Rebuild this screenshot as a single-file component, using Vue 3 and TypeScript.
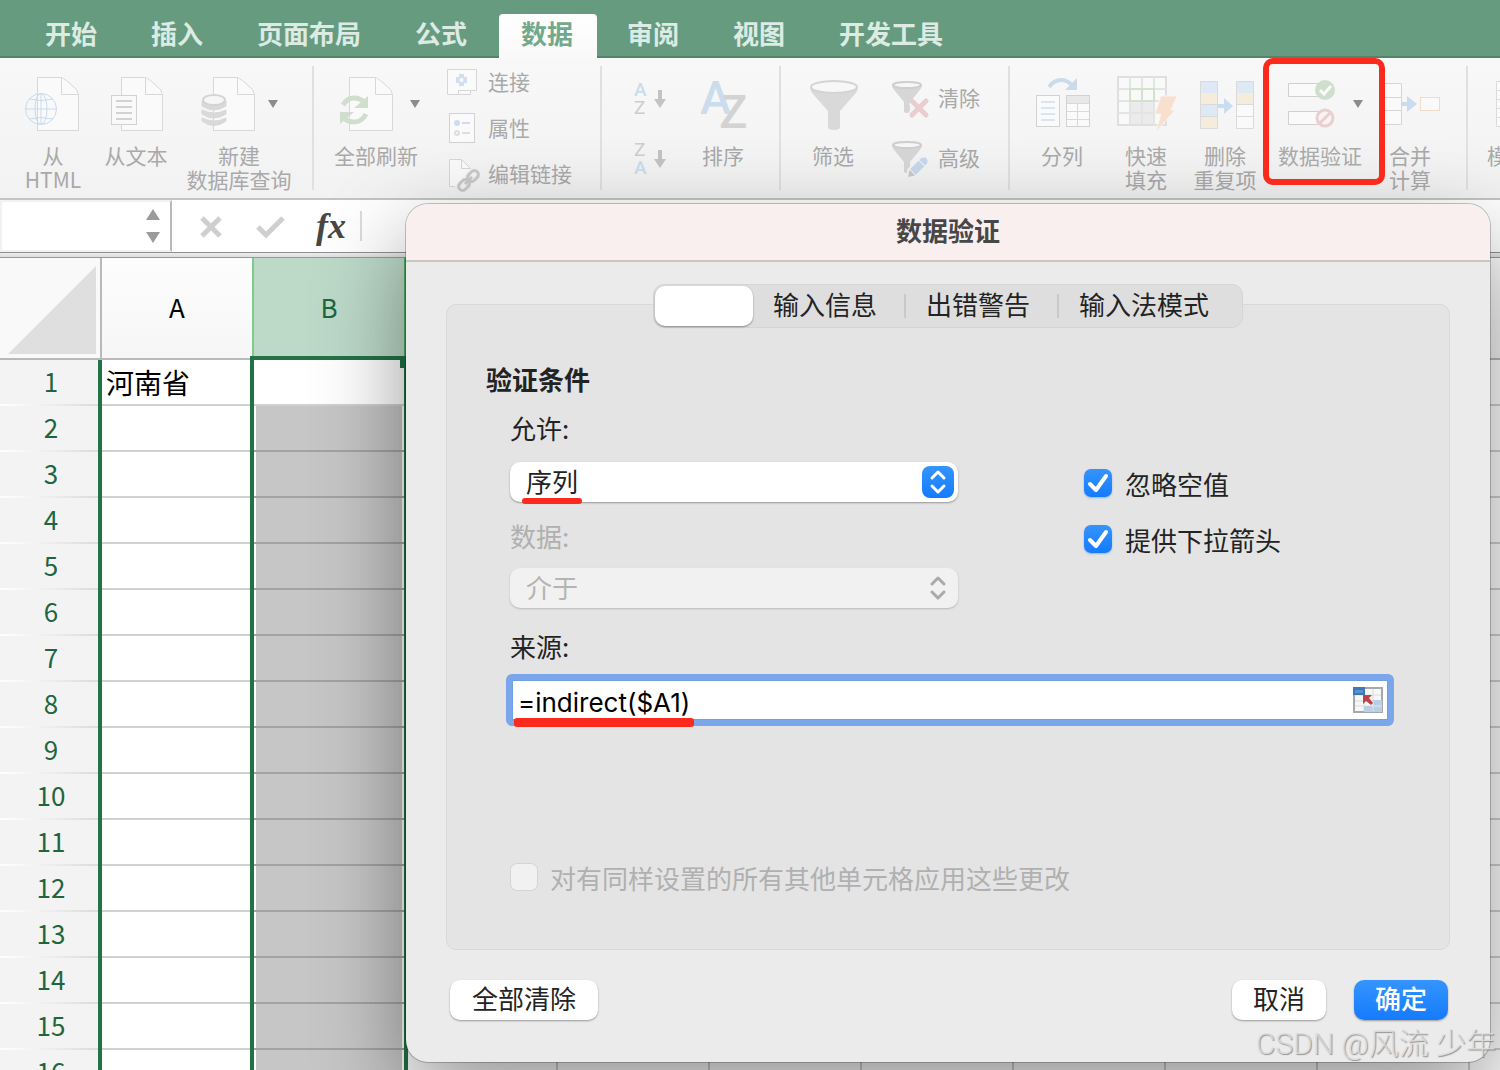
<script setup lang="ts">
import { ref } from 'vue'

interface Column {
  id: number
  label: string
}

const menuTabs: string[] = ['开始', '插入', '页面布局', '公式', '数据', '审阅', '视图', '开发工具']
const activeMenu = ref('数据')

const columns: Column[] = ['A', 'B', '', '', '', '', '', '', '', ''].map((label, id) => ({ id, label }))
const rows: number[] = Array.from({ length: 16 }, (_, i) => i + 1)
const cells: Record<string, string> = { A1: '河南省' }

const allow = ref('序列')
const operator = ref('介于')
const source = ref('=indirect($A1)')
const ignoreBlank = ref(true)
const showDropdown = ref(true)
const applyAll = ref(false)
const nameBox = ref('')
</script>

<template>
  <div class="app">
    <nav class="menu">
      <button
        v-for="tab in menuTabs"
        :key="tab"
        type="button"
        class="menu-tab"
        :class="{ active: tab === activeMenu }"
        @click="activeMenu = tab"
      >{{ tab }}</button>
    </nav>

    <div class="ribbon">
      <div class="group g-source">
        <button type="button" class="tool w70">
          <svg viewBox="18 66 70 77" width="70" height="77" aria-hidden="true">
            <path class="page" d="M37.5 77.5h24l5 3l10 9l2 5v36h-41z" />
            <path class="page" d="M61.5 77.5v17h17" />
            <g class="globe">
              <circle cx="41" cy="109" r="15.5" />
              <ellipse cx="41" cy="109" rx="6" ry="15.5" />
              <path d="M25.500 109h31M41 93.500v31M29 99q12 3 24 0M29 119q12-3 24 0" />
            </g>
          </svg>
          <span>从<br>HTML</span>
        </button>
        <button type="button" class="tool w72">
          <svg viewBox="100 66 72 77" width="72" height="77" aria-hidden="true">
            <path class="page" d="M121.500 77.500h24l5 3l10 9l2 5v36h-41z" />
            <path class="page" d="M145.500 77.500v17h17" />
            <rect x="111.500" y="95.500" width="25" height="29" fill="#f9f9f9" stroke="#d2d2d2" />
            <path d="M116 101h16M116 107h16M116 113h16M116 119h16" stroke="#d2d2d2" stroke-width="2" />
          </svg>
          <span>从文本</span>
        </button>
        <button type="button" class="tool w110">
          <svg viewBox="184 66 110 77" width="110" height="77" aria-hidden="true">
            <path class="page" d="M213.500 77.500h24l5 3l10 9l2 5v36h-41z" />
            <path class="page" d="M237.500 77.500v17h17" />
            <path d="M202 118v3q12 9 24 0v-3q-12 6-24 0zM202 110v4q12 8 24 0v-4q-12 6-24 0zM202 101v5q12 8 24 0v-5z" fill="#d9d9d9" stroke="#d9d9d9" />
            <ellipse cx="214" cy="100" rx="11" ry="5" fill="#f6f6f6" stroke="#d4d4d4" stroke-width="2" />
            <path class="caret" d="M268 100h10l-5 8z" />
          </svg>
          <span>新建<br>数据库查询</span>
        </button>
      </div>

      <div class="group g-connect">
        <button type="button" class="tool w96">
          <svg viewBox="328 66 96 77" width="96" height="77" aria-hidden="true">
            <path class="page" d="M349.500 77.500h26l5 3l10 9l2 5v36h-43z" />
            <path class="page" d="M375.500 77.500v17h17" />
            <g class="refresh">
              <path d="M343 105q4-7 11-7q6 0 10 4" />
              <path d="M366 114q-4 8-12 8q-6 0-10-4" />
            </g>
            <path d="M368 96v12h-14zM340 124v-12h14z" fill="#d0dfcd" />
            <path class="caret" d="M410 100h10l-5 8z" />
          </svg>
          <span>全部刷新</span>
        </button>
        <div class="stack three">
          <button type="button" class="mini">
            <svg viewBox="0 0 32 32" width="32" height="32" aria-hidden="true">
              <path d="M1.500 3.500h29v21h-6v4h-23z" fill="#fafafa" stroke="#d6d6d6" />
              <path d="M12.500 28v-3.500h12" fill="none" stroke="#d6d6d6" />
              <path d="M13 8h5v3h3v6h-3v3h-5v-3h-3v-6h3z" fill="#cfdff1" />
              <circle cx="15.500" cy="14" r="2" fill="#fafafa" />
            </svg>
            <span>连接</span>
          </button>
          <button type="button" class="mini">
            <svg viewBox="0 0 32 32" width="32" height="32" aria-hidden="true">
              <rect x="3.500" y="1.500" width="25" height="29" fill="#fafafa" stroke="#d2d2d2" />
              <circle cx="11" cy="11" r="3" fill="#cddcf0" />
              <path d="M16 11h8" stroke="#cddcf0" stroke-width="2" />
              <circle cx="11" cy="21" r="2" fill="none" stroke="#dedede" stroke-width="2" />
              <path d="M16 21h8" stroke="#dedede" stroke-width="2" />
            </svg>
            <span>属性</span>
          </button>
          <button type="button" class="mini">
            <svg viewBox="0 0 32 32" width="32" height="32" aria-hidden="true">
              <path d="M9 28.500h-5.500v-27h12l9 9" fill="#fafafa" stroke="#d6d6d6" />
              <path d="M15.500 1.500v9h9" fill="none" stroke="#d6d6d6" />
              <g fill="none" stroke="#c9c9c9" stroke-width="3">
                <rect x="-6" y="-4" width="12" height="8" rx="4" transform="translate(27 18) rotate(-45)" />
                <rect x="-6" y="-4" width="12" height="8" rx="4" transform="translate(18 27) rotate(-45)" />
              </g>
              <path d="M19 26l7-7" stroke="#c9c9c9" stroke-width="3" />
            </svg>
            <span>编辑链接</span>
          </button>
        </div>
      </div>

      <div class="group g-sort">
        <div class="stack sorts">
          <button type="button" class="sort" aria-label="升序">
            <svg viewBox="0 0 40 40" width="40" height="40" aria-hidden="true">
              <text x="4" y="17" class="ltr blue">A</text>
              <text x="4" y="35" class="ltr">Z</text>
              <path d="M28 11h4v9h4l-6 9l-6-9h4z" fill="#c3c3c3" />
            </svg>
          </button>
          <button type="button" class="sort" aria-label="降序">
            <svg viewBox="0 0 40 40" width="40" height="40" aria-hidden="true">
              <text x="4" y="17" class="ltr">Z</text>
              <text x="4" y="35" class="ltr blue">A</text>
              <path d="M28 11h4v9h4l-6 9l-6-9h4z" fill="#c3c3c3" />
            </svg>
          </button>
        </div>
        <button type="button" class="tool w66">
          <svg viewBox="690 66 66 77" width="66" height="77" aria-hidden="true">
            <text x="719" y="128" class="big">Z</text>
            <text x="700" y="114" class="big blue">A</text>
          </svg>
          <span>排序</span>
        </button>
      </div>

      <div class="group g-filter">
        <button type="button" class="tool w66">
          <svg viewBox="800 66 66 77" width="66" height="77" aria-hidden="true">
            <path d="M810 87q0 4 3 7l15 17v16q0 3 6 3t6-3v-16l15-17q3-3 3-7z" fill="#d9d9d9" />
            <ellipse cx="834" cy="87" rx="23" ry="6" fill="#f7f7f7" stroke="#d4d4d4" stroke-width="2" />
          </svg>
          <span>筛选</span>
        </button>
        <div class="stack two">
          <button type="button" class="mini">
            <svg viewBox="0 0 40 36" width="40" height="36" aria-hidden="true">
              <path d="M2 4q0 3 3 6l9 11v10q3 2 6 0v-10l9-11q3-3 3-6z" fill="#d6d6d6" />
              <ellipse cx="17" cy="4" rx="14" ry="3" fill="#f7f7f7" stroke="#cfcfcf" stroke-width="2" />
              <path d="M22 20l14 14M36 20l-14 14" stroke="#f6f6f6" stroke-width="9" />
              <path d="M22 20l14 14M36 20l-14 14" stroke="#e9cdd0" stroke-width="5" stroke-linecap="round" />
            </svg>
            <span>清除</span>
          </button>
          <button type="button" class="mini">
            <svg viewBox="0 0 40 36" width="40" height="36" aria-hidden="true">
              <path d="M2 4q0 3 3 6l9 11v10q3 2 6 0v-10l9-11q3-3 3-6z" fill="#d6d6d6" />
              <ellipse cx="17" cy="4" rx="14" ry="3" fill="#f7f7f7" stroke="#cfcfcf" stroke-width="2" />
              <g transform="translate(28 26) rotate(-45)">
                <path d="M-16 0l7-6h19q4 1 4 6t-4 6h-19z" fill="#f3f3f3" />
                <path d="M-14 0l6-4v8z" fill="#c9c9c9" />
                <path d="M-7-4h12v8h-12z" fill="#c6d8ea" />
                <path d="M6-4h2q4 1 4 4t-4 4h-2z" fill="#c6d8ea" />
              </g>
            </svg>
            <span>高级</span>
          </button>
        </div>
      </div>

      <div class="group g-tools">
        <button type="button" class="tool w72">
          <svg viewBox="1026 66 72 77" width="72" height="77" aria-hidden="true">
            <path d="M1049 87q5-7 12-7q6 0 11 5" fill="none" stroke="#cadbec" stroke-width="4" />
            <path d="M1077 78v12h-12z" fill="#cadbec" />
            <rect x="1036.500" y="95.500" width="23" height="31" fill="#fafafa" stroke="#d2d2d2" />
            <path d="M1041 102h14M1041 108h14M1041 114h14M1041 120h14" stroke="#dbe5f1" stroke-width="2" />
            <rect x="1066.500" y="95.500" width="23" height="31" fill="#fafafa" stroke="#d2d2d2" />
            <path d="M1067 99.500h22" stroke="#e8e8e8" stroke-width="7" />
            <path d="M1067 103.500h22M1067 111.500h22M1067 119.500h22M1077.500 103v23" stroke="#d9d9d9" />
          </svg>
          <span>分列</span>
        </button>
        <button type="button" class="tool w84">
          <svg viewBox="1104 66 84 77" width="84" height="77" aria-hidden="true">
            <rect x="1118" y="77" width="48" height="48" fill="#f9f9f9" stroke="#dfdfdf" stroke-width="2" />
            <path d="M1130 101h24v23h-24z" fill="#ebebeb" />
            <path d="M1130 77v48M1142 77v48M1154 77v48M1118 89h48M1118 101h48M1118 113h48" stroke="#e4e4e4" stroke-width="2" />
            <path d="M1130 89h24v12h-24zM1142 89v12" fill="none" stroke="#d3e2cd" stroke-width="2" />
            <path d="M1161 96h16l-6 14h4l-19 22l5-18h-6z" fill="#f8dfce" stroke="#f5f5f5" />
          </svg>
          <span>快速<br>填充</span>
        </button>
        <button type="button" class="tool w62">
          <svg viewBox="1194 66 62 77" width="62" height="77" aria-hidden="true">
            <path d="M1200 81h18v12h-18zM1200 104h18v12h-18zM1236 81h18v12h-18z" fill="#dfe9f5" />
            <path d="M1200 93h18v11h-18zM1200 116h18v12h-18zM1236 93h18v11h-18z" fill="#f5ecdb" />
            <path d="M1236 104h18v24h-18z" fill="#fafafa" />
            <path d="M1200.500 81.500h17v47h-17zM1236.500 81.500h17v47h-17zM1236.500 104.500h17M1236.500 116.500h17M1200.500 104.500h17M1200.500 116.500h17" fill="none" stroke="#dadada" />
            <path d="M1218 104h6v-6l9 8l-9 8v-6h-6z" fill="#cadcef" />
          </svg>
          <span>删除<br>重复项</span>
        </button>
        <button type="button" class="tool w116 marked">
          <svg viewBox="1262 66 116 77" width="116" height="77" aria-hidden="true">
            <path d="M1288.500 83.500h30v13h-30zM1288.500 111.500h30v13h-30z" fill="#fafafa" stroke="#d0d0d0" />
            <circle cx="1325" cy="90" r="10" fill="#d0dfcd" />
            <path d="M1320 90l4 4l7-8" fill="none" stroke="#fafafa" stroke-width="3" />
            <circle cx="1325" cy="118" r="8" fill="#f8f4f4" stroke="#e9cfd1" stroke-width="3" />
            <path d="M1320 123l10-10" stroke="#e9cfd1" stroke-width="3" />
            <path class="caret" d="M1353 100h10l-5 8z" />
          </svg>
          <span>数据验证</span>
        </button>
        <button type="button" class="tool w52">
          <svg viewBox="1384 66 52 77" width="52" height="77" aria-hidden="true">
            <path d="M1380.500 83.500h21v41h-21zM1380.500 97.500h21M1380.500 110.500h21" fill="#fafafa" stroke="#d6d6d6" />
            <path d="M1402 102h5v-6l10 8l-10 8v-6h-5z" fill="#cadcef" />
            <rect x="1420.500" y="97.500" width="19" height="13" fill="#fafafa" stroke="#f3d9c8" />
          </svg>
          <span>合并<br>计算</span>
        </button>
      </div>

      <div class="group g-last">
        <button type="button" class="tool w84">
          <svg viewBox="1487 66 84 77" width="84" height="77" aria-hidden="true">
            <path d="M1496.500 81.500h40v45h-40zM1496.500 90.500h40M1496.500 99.500h40M1496.500 108.500h40M1496.500 117.500h40" fill="#fafafa" stroke="#dcdcdc" />
          </svg>
          <span>模拟分析</span>
        </button>
      </div>
    </div>

    <div class="formula-bar">
      <div class="name-box">
        <input v-model="nameBox" type="text" aria-label="名称框">
        <svg viewBox="0 0 14 36" width="14" height="36" aria-hidden="true">
          <path d="M0 12l7-11l7 11zM0 24l7 11l7-11z" fill="#9b9b9b" />
        </svg>
      </div>
      <button type="button" class="bar-btn" aria-label="取消输入">
        <svg viewBox="0 0 30 30" width="30" height="30" aria-hidden="true">
          <path d="M6 7l18 18M24 7l-18 18" stroke="#cfcfcf" stroke-width="5" />
        </svg>
      </button>
      <button type="button" class="bar-btn" aria-label="确认输入">
        <svg viewBox="0 0 30 30" width="30" height="30" aria-hidden="true">
          <path d="M3 16l8 8l17-17" fill="none" stroke="#cfcfcf" stroke-width="5" />
        </svg>
      </button>
      <button type="button" class="bar-btn fx">fx</button>
      <i class="bar-rule"></i>
    </div>

    <div class="sheet">
      <table>
        <thead>
          <tr>
            <th class="corner">
              <svg viewBox="0 0 100 100" width="100" height="100" aria-hidden="true">
                <path d="M96 8v88H8z" fill="#dfdfdf" />
              </svg>
            </th>
            <th v-for="c in columns" :key="c.id" class="col" :class="{ picked: c.label === 'B' }">{{ c.label }}</th>
          </tr>
        </thead>
        <tbody>
          <tr v-for="r in rows" :key="r">
            <th class="row">{{ r }}</th>
            <td
              v-for="c in columns"
              :key="c.id"
              :class="{ filled: c.label === 'B' && r > 1 }"
            >{{ cells[c.label + r] }}</td>
          </tr>
        </tbody>
      </table>
      <div class="selection"></div>
    </div>

    <section class="dialog" role="dialog" aria-labelledby="dialog-title">
      <h1 id="dialog-title">数据验证</h1>
      <div class="dialog-body">
        <div class="segments">
          <button type="button" class="segment current" aria-label="设置"></button>
          <button type="button" class="segment">输入信息</button>
          <i></i>
          <button type="button" class="segment">出错警告</button>
          <i></i>
          <button type="button" class="segment">输入法模式</button>
        </div>

        <div class="panel">
          <h2>验证条件</h2>
          <div class="criteria">
            <div class="pickers">
              <label for="allow">允许:</label>
              <div class="select">
                <select id="allow" v-model="allow">
                  <option>序列</option>
                </select>
                <svg class="stepper on" viewBox="0 0 32 32" width="32" height="32" aria-hidden="true">
                  <path d="M10 12l6-6l6 6M10 20l6 6l6-6" />
                </svg>
                <em class="mark short"></em>
              </div>
              <label for="operator" class="dim">数据:</label>
              <div class="select off">
                <select id="operator" v-model="operator" disabled>
                  <option>介于</option>
                </select>
                <svg class="stepper" viewBox="0 0 32 32" width="32" height="32" aria-hidden="true">
                  <path d="M10 12l6-6l6 6M10 20l6 6l6-6" />
                </svg>
              </div>
            </div>
            <div class="checks">
              <label class="check"><input v-model="ignoreBlank" type="checkbox">忽略空值</label>
              <label class="check"><input v-model="showDropdown" type="checkbox">提供下拉箭头</label>
            </div>
          </div>
          <div class="source">
            <label for="source">来源:</label>
            <div class="field">
              <input id="source" v-model="source" type="text">
              <button type="button" aria-label="选择区域">
                <svg viewBox="0 0 30 26" width="30" height="26" aria-hidden="true">
                  <rect x="1" y="1" width="28" height="24" fill="#f7f7f7" stroke="#a5a9ae" stroke-width="2" />
                  <path d="M2 8h26M2 14h26M2 19h26M11 2v22M20 2v22" stroke="#dcdcdc" />
                  <path d="M0 0h12v8H0z" fill="#3c78b8" />
                  <path d="M2 3h8v3H2z" fill="#5a92cc" />
                  <path d="M20 13h9v12H11v-6h9z" fill="#b9cfe6" />
                  <path d="M20 19h9M20 14v10" stroke="#dbe6f1" />
                  <path d="M10 8h9l-3 3l4 5l-2 2l-5-4l-3 3z" fill="#bd4348" />
                </svg>
              </button>
              <em class="mark long"></em>
            </div>
          </div>
          <label class="check dim apply"><input v-model="applyAll" type="checkbox" disabled>对有同样设置的所有其他单元格应用这些更改</label>
        </div>

        <footer>
          <button type="button" class="push clear">全部清除</button>
          <button type="button" class="push">取消</button>
          <button type="button" class="push primary">确定</button>
        </footer>
      </div>
    </section>

    <p class="watermark">CSDN @风流 少年</p>
  </div>
</template>

<style>
body {
  margin: 0;
  overflow: hidden;
}
</style>

<style scoped>
.app {
  position: relative;
  display: flex;
  flex-direction: column;
  height: 100vh;
  overflow: hidden;
  background: #fff;
  color: #232323;
  font-family: "Noto Sans CJK SC", "Noto Sans", sans-serif;
  font-size: 26px;
}
.app *,
.app *::after {
  box-sizing: border-box;
}
button,
input,
select {
  margin: 0;
  padding: 0;
  border: 0;
  background: none;
  color: inherit;
  font: inherit;
}
svg {
  display: block;
  overflow: visible;
}

/* menu */
.menu {
  display: flex;
  flex: none;
  align-items: flex-end;
  gap: 8px;
  height: 58px;
  padding-left: 23px;
  background: linear-gradient(#669b80 56px, #578468 56px);
}
.menu-tab {
  height: 44px;
  padding: 0 24px 6px 22px;
  border-radius: 4px 4px 0 0;
  color: #dcebe3;
  font-weight: 700;
  line-height: 36px;
  white-space: nowrap;
}
.menu-tab.active {
  background: linear-gradient(#fff, #f9f9f9);
  color: #73a98b;
}

/* ribbon */
.ribbon {
  display: flex;
  flex: none;
  height: 142px;
  padding-top: 8px;
  overflow: hidden;
  border-bottom: 2px solid #c3c3c3;
  background: linear-gradient(#f8f8f8, #f2f2f2);
  color: #a9a9a9;
  font-size: 21px;
  line-height: 24px;
}
.group {
  display: flex;
  flex: none;
  height: 124px;
  border-right: 2px solid #e0e0e0;
}
.g-source { gap: 12px; padding: 0 18px; }
.g-connect { gap: 22px; padding: 0 26px 0 14px; }
.g-sort { gap: 20px; padding: 0 23px 0 28px; }
.g-filter { gap: 24px; padding: 0 28px 0 19px; }
.g-tools { gap: 6px; padding: 0 30px 0 16px; }
.g-last { padding-left: 19px; border-right: 0; }
.tool {
  position: relative;
  display: flex;
  flex: none;
  flex-direction: column;
  align-items: center;
  white-space: nowrap;
}
.w52 { width: 52px; }
.w62 { width: 62px; }
.w66 { width: 66px; }
.w70 { width: 70px; }
.w72 { width: 72px; }
.w84 { width: 84px; }
.w96 { width: 96px; }
.w110 { width: 110px; }
.w116 { width: 116px; }
.marked {
  z-index: 1;
}
.marked::after {
  content: "";
  position: absolute;
  top: -8px;
  right: -7px;
  left: 1px;
  height: 127px;
  border: 6px solid #fc2a1c;
  border-radius: 10px;
}
.page { fill: #fafafa; stroke: #d8d8d8; }
.globe { fill: none; stroke: #c9daee; }
.refresh { fill: none; stroke: #d0dfcd; stroke-width: 5; }
.caret { fill: #8c8c8c; }
.ltr {
  fill: #cdcdcd;
  font: 19px Roboto, sans-serif;
}
.big {
  fill: #d3d3d3;
  font: 500 47px Roboto, sans-serif;
}
.blue { fill: #cbdcec; }
.ltr.blue { font-weight: 500; }
.stack {
  display: flex;
  flex: none;
  flex-direction: column;
}
.three { gap: 14px; width: 128px; }
.two { gap: 24px; width: 90px; padding-top: 15px; }
.sorts { gap: 20px; width: 40px; padding-top: 13px; }
.mini {
  display: flex;
  align-items: center;
  gap: 10px;
  height: 32px;
  white-space: nowrap;
}
.mini span { padding-bottom: 2px; }
.two .mini { gap: 8px; height: 36px; }
.two .mini span { padding-bottom: 4px; }

/* formula bar */
.formula-bar {
  display: flex;
  flex: none;
  align-items: center;
  height: 58px;
  padding-bottom: 6px;
  background: linear-gradient(#fff 52px, #8e8e8e 52px, #8e8e8e 53px, #eee 53px, #ddd 57px, #999 57px);
}
.name-box {
  display: flex;
  align-items: center;
  width: 172px;
  height: 52px;
  padding-right: 10px;
  border: 2px solid #f2f2f2;
  border-right-color: #b9b9b9;
}
.name-box input {
  flex: 1;
  min-width: 0;
  height: 40px;
}
.bar-btn {
  width: 30px;
  height: 30px;
  margin-left: 29px;
}
.bar-btn:first-of-type { margin-left: 24px; }
.fx {
  padding-left: 2px;
  color: #474747;
  font: italic bold 36px/30px "Liberation Serif", serif;
}
.bar-rule {
  width: 2px;
  height: 30px;
  margin-left: 16px;
  background: #dcdcdc;
}

/* sheet */
.sheet {
  position: relative;
  flex: 1;
  min-height: 0;
  overflow: hidden;
}
table {
  width: 1622px;
  border-spacing: 0;
  table-layout: fixed;
}
th {
  padding: 0;
  font-weight: 400;
}
.corner {
  width: 102px;
  height: 102px;
  border-right: 2px solid #b9b9b9;
  border-bottom: 2px solid #b9b9b9;
  background: #f9f9f9;
}
.col {
  padding-bottom: 4px;
  border-right: 2px solid #c9c9c9;
  border-bottom: 2px solid #b9b9b9;
  background: linear-gradient(#fdfdfd, #f6f6f6);
  color: #000;
}
.col.picked {
  border-right-color: #4fae62;
  background: #bddac9;
  box-shadow: -2px 0 #7fcb8c;
  color: #1f6540;
}
.row {
  height: 46px;
  padding: 0 0 4px 4px;
  border-right: 4px solid #217346;
  background:
    linear-gradient(90deg, #fff, #f3f3f3 34px, #dcdcdc) bottom / 100% 2px no-repeat,
    #f3f3f3;
  color: #1f6540;
  line-height: 38px;
}
td {
  height: 46px;
  padding: 0 4px;
  border-right: 2px solid #d0d0d0;
  border-bottom: 2px solid #d0d0d0;
  color: #000;
  font-size: 28px;
  line-height: 40px;
  white-space: nowrap;
}
td.filled {
  border-right-color: #fff;
  border-bottom-color: #a3a3a3;
  background: linear-gradient(#c6c6c6, #c6c6c6) 2px 0 / 146px 100% no-repeat;
}
.selection {
  position: absolute;
  top: 98px;
  bottom: -4px;
  left: 250px;
  width: 158px;
  border: 4px solid #217346;
}
.selection::after {
  content: "";
  position: absolute;
  top: 0;
  right: 0;
  width: 4px;
  height: 8px;
  background: #217346;
}

/* dialog */
.dialog {
  position: absolute;
  top: 204px;
  right: 10px;
  left: 406px;
  overflow: hidden;
  border-radius: 22px;
  background: #ebebeb;
  box-shadow: 0 0 0 1px rgba(0, 0, 0, 0.22), 0 36px 90px rgba(0, 0, 0, 0.42);
}
h1,
h2 {
  margin: 0;
  font-size: 26px;
  font-weight: 700;
}
h1 {
  height: 58px;
  border-bottom: 2px solid #c9c6c6;
  background: #f9efef;
  color: #474747;
  line-height: 52px;
  text-align: center;
}
.dialog-body {
  display: flex;
  flex-direction: column;
  padding: 22px 40px 42px;
}
.segments {
  z-index: 1;
  display: flex;
  align-items: center;
  align-self: center;
  height: 44px;
  margin-bottom: -24px;
  padding: 0 6px 0 1px;
  border: 1px solid #d5d5d5;
  border-radius: 11px;
  background: #dedede;
}
.segment {
  height: 40px;
  padding: 0 27px 4px 20px;
  line-height: 36px;
  white-space: nowrap;
}
.segment.current {
  width: 98px;
  border-radius: 10px;
  background: #fff;
  box-shadow: 0 1px 2px rgba(0, 0, 0, 0.4);
}
.segments i {
  width: 2px;
  height: 24px;
  background: #c9c9c9;
}
.panel {
  padding: 56px 55px 57px 39px;
  border: 1px solid #d8d8d8;
  border-radius: 10px;
  background: #e4e4e4;
}
h2 {
  line-height: 36px;
}
.criteria {
  display: grid;
  grid-template-columns: 1fr 310px;
  margin: 12px 0 0 24px;
}
.pickers label,
.source label {
  display: block;
  height: 40px;
  line-height: 38px;
}
.dim {
  color: #b0b0b0;
}
.select {
  position: relative;
  max-width: 448px;
  height: 40px;
  margin: 13px 0 15px;
  border-radius: 10px;
  background: #fff;
  box-shadow: 0 1px 2px rgba(0, 0, 0, 0.35);
}
.select.off {
  margin: 11px 0 19px;
  background: #f1f1f1;
  box-shadow: 0 1px 2px rgba(0, 0, 0, 0.2);
  color: #b4b4b4;
}
select {
  width: 100%;
  height: 40px;
  padding: 0 40px 6px 16px;
  appearance: none;
  opacity: 1;
}
.stepper {
  position: absolute;
  top: 4px;
  right: 4px;
  fill: none;
  stroke: #a9a9a9;
  stroke-width: 3;
  stroke-linecap: round;
  stroke-linejoin: round;
  pointer-events: none;
}
.stepper.on {
  border-radius: 8px;
  background: linear-gradient(#3594fd, #157bfe);
  stroke: #fff;
}
.mark {
  position: absolute;
  border-radius: 3px;
  background: #fc2a1c;
}
.mark.short {
  bottom: -2px;
  left: 12px;
  width: 60px;
  height: 6px;
}
.mark.long {
  width: 180px;
  height: 9px;
}
.checks {
  display: flex;
  flex-direction: column;
  gap: 16px;
  padding-top: 54px;
}
.check {
  display: flex;
  align-items: center;
  gap: 13px;
  height: 40px;
  white-space: nowrap;
}
.check input {
  flex: none;
  width: 28px;
  height: 28px;
  border-radius: 7px;
  appearance: none;
  background: #f1f1f1;
  box-shadow: inset 0 0 0 1px #d4d4d4;
}
.check input:checked {
  background:
    url("data:image/svg+xml,%3Csvg xmlns='http://www.w3.org/2000/svg' viewBox='0 0 28 28'%3E%3Cpath d='M6 15l6 6l10-14' fill='none' stroke='white' stroke-width='4' stroke-linecap='round' stroke-linejoin='round'/%3E%3C/svg%3E"),
    linear-gradient(#3594fd, #157bfe);
  box-shadow: 0 1px 2px rgba(20, 110, 230, 0.4);
}
.source label {
  margin-left: 24px;
}
.field {
  position: relative;
  display: flex;
  align-items: center;
  height: 52px;
  margin: 7px 0 0 20px;
  padding: 0 5px 0 4px;
  border: 6px solid #7ba7ea;
  border-radius: 6px;
  background: #fff;
  box-shadow: inset 0 0 0 1px #6f9fe6;
}
.field input {
  flex: 1;
  min-width: 0;
  height: 38px;
  padding: 4px 0 0 2px;
  outline: 0;
  color: #000;
  font-family: Inter, "Noto Sans", sans-serif;
}
.field .mark {
  bottom: -7px;
  left: 2px;
}
.panel .apply {
  gap: 12px;
  margin: 131px 0 -5px 24px;
}
footer {
  display: flex;
  gap: 28px;
  padding: 30px 2px 0 4px;
}
.push {
  height: 40px;
  padding: 0 21px 4px;
  border-radius: 10px;
  background: #fff;
  box-shadow: 0 1px 2px rgba(0, 0, 0, 0.35);
  line-height: 36px;
  white-space: nowrap;
}
.clear {
  min-width: 148px;
  margin-right: auto;
}
.primary {
  background: linear-gradient(#3594fd, #157bfe);
  color: #fff;
  font-weight: 500;
}
.watermark {
  position: absolute;
  right: 4px;
  bottom: 6px;
  margin: 0;
  color: rgba(222, 222, 222, 0.85);
  font-family: Roboto, "Noto Sans CJK SC", sans-serif;
  font-size: 30px;
  font-weight: 300;
  line-height: 40px;
  text-shadow: 1px 1px 1px rgba(110, 110, 110, 0.7);
  pointer-events: none;
}
</style>
